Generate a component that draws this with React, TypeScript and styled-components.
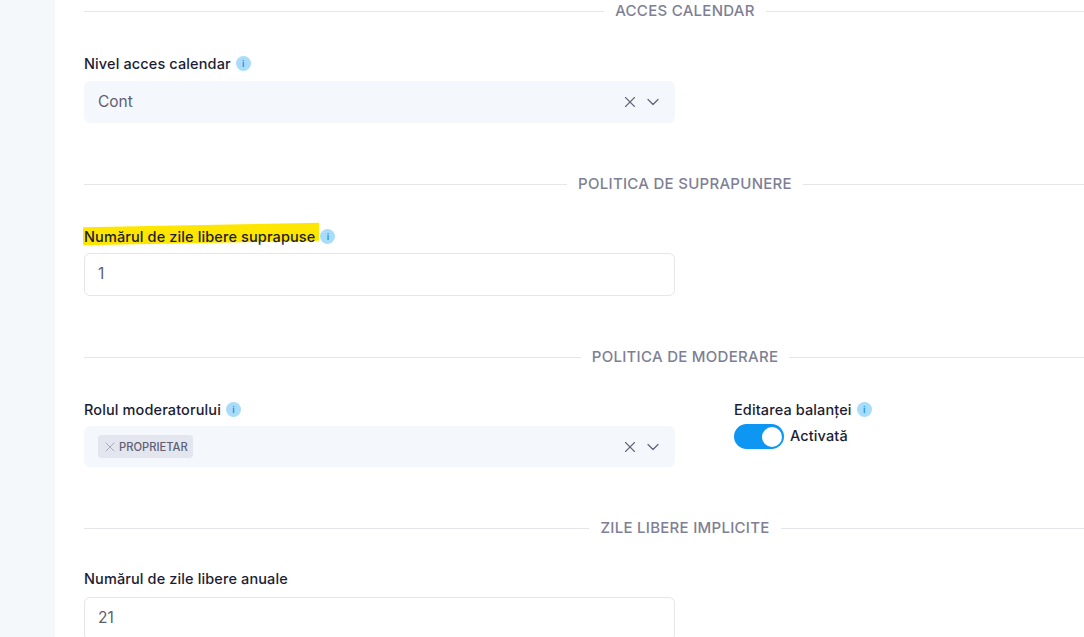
import { FC, ReactNode } from 'react'
import styled, { createGlobalStyle } from 'styled-components'
import { X, ChevronDown } from 'lucide-react'

const GlobalStyle = createGlobalStyle`
  html, body {
    margin: 0;
    height: 100%;
    overflow: hidden;
    background: #fff;
  }
  body {
    font-family: Inter, "Noto Sans", "Liberation Sans", sans-serif;
  }
`

const Info: FC = () => <InfoBadge>i</InfoBadge>

const Divider: FC<{ children: ReactNode }> = ({ children }) => (
  <DividerRow>
    <DividerText>{children}</DividerText>
  </DividerRow>
)

const SelectIcons: FC = () => (
  <IconGroup>
    <X size={18} strokeWidth={1.5} />
    <ChevronDown size={20} strokeWidth={1.5} />
  </IconGroup>
)

const App: FC = () => {
  return (
    <Page>
      <GlobalStyle />
      <Sidebar />
      <Content>
        <Divider>ACCES CALENDAR</Divider>
        <Section>
          <Label $gap={8}>
            Nivel acces calendar <Info />
          </Label>
          <Select $height={42}>
            <SelectValue>Cont</SelectValue>
            <SelectIcons />
          </Select>
        </Section>

        <Divider>POLITICA DE SUPRAPUNERE</Divider>
        <Section>
          <Label>
            <Highlighted>Numărul de zile libere suprapuse</Highlighted> <Info />
          </Label>
          <Input>
            <span>1</span>
          </Input>
        </Section>

        <Divider>POLITICA DE MODERARE</Divider>
        <TwoColumns>
          <div>
            <Label>
              Rolul moderatorului <Info />
            </Label>
            <Select $height={41}>
              <Tag>
                <X size={16} strokeWidth={1} />
                PROPRIETAR
              </Tag>
              <SelectIcons />
            </Select>
          </div>
          <div>
            <Label>
              Editarea balanței <Info />
            </Label>
            <SwitchRow>
              <Switch />
              <SwitchLabel>Activată</SwitchLabel>
            </SwitchRow>
          </div>
        </TwoColumns>

        <Divider>ZILE LIBERE IMPLICITE</Divider>
        <Section $top={29}>
          <Label $gap={9}>Numărul de zile libere anuale</Label>
          <Input>
            <span>21</span>
          </Input>
        </Section>
      </Content>
    </Page>
  )
}

const Page = styled.div`
  display: flex;
  width: 1084px;
  height: 637px;
  overflow: hidden;
`

const Sidebar = styled.div`
  flex: 0 0 55px;
  background: #f4f8fb;
`

const Content = styled.div`
  flex: 0 0 1202px;
  margin-left: 29px;
  padding-top: 1px;
`

const DividerRow = styled.div`
  display: flex;
  align-items: center;
  gap: 11px;
  height: 21px;
  &::before,
  &::after {
    content: '';
    flex: 1;
    height: 1px;
    background: #e4e6ec;
  }
`

const DividerText = styled.span`
  font-size: 15px;
  font-weight: 500;
  color: #7e7f94;
  letter-spacing: 0.28px;
  margin-top: -2px;
`

const Section = styled.div<{ $top?: number }>`
  padding-top: ${(p) => p.$top ?? 31}px;
  height: 152px;
  box-sizing: border-box;
`

const TwoColumns = styled(Section)`
  display: grid;
  grid-template-columns: 591px 1fr;
  column-gap: 59px;
  height: 150px;
`

const Label = styled.div<{ $gap?: number }>`
  display: flex;
  align-items: center;
  gap: 5px;
  height: 20px;
  margin-bottom: ${(p) => p.$gap ?? 7}px;
  font-size: 14.5px;
  font-weight: 500;
  letter-spacing: 0.12px;
  color: #1b1c33;
  white-space: nowrap;
`

const Highlighted = styled.span`
  position: relative;
  z-index: 0;
  &::before {
    content: '';
    position: absolute;
    z-index: -1;
    left: -1px;
    right: -4px;
    top: -2.5px;
    bottom: 1.5px;
    background: #ffe600;
    transform: skewY(-1.1deg);
  }
`

const InfoBadge = styled.span`
  display: inline-flex;
  align-items: center;
  justify-content: center;
  width: 15px;
  height: 15px;
  border-radius: 50%;
  background: #a9dcfb;
  color: #1590e0;
  font-size: 9px;
  font-weight: 600;
  letter-spacing: 0;
`

const Select = styled.div<{ $height: number }>`
  display: flex;
  align-items: center;
  justify-content: space-between;
  box-sizing: border-box;
  width: 591px;
  height: ${(p) => p.$height}px;
  padding: 0 12px 0 14px;
  border-radius: 6px;
  background: #f4f7fb;
`

const SelectValue = styled.span`
  font-size: 15.5px;
  color: #5e5f73;
  margin-top: -2px;
`

const IconGroup = styled.span`
  display: flex;
  align-items: center;
  gap: 4px;
  color: #64657a;
`

const Tag = styled.span`
  display: flex;
  align-items: center;
  gap: 1px;
  height: 23px;
  padding: 0 5px 0 4px;
  border-radius: 4px;
  background: #e3e6ef;
  color: #5e5f73;
  font-size: 11.2px;
  font-weight: 500;
  svg {
    color: #8d8e9e;
  }
`

const Input = styled.div`
  display: flex;
  align-items: center;
  box-sizing: border-box;
  width: 591px;
  height: 43px;
  padding: 0 13px;
  border: 1px solid #e4e6ec;
  border-radius: 6px;
  background: #fff;
  font-size: 15.5px;
  color: #5e5f73;
  span {
    margin-top: -2px;
  }
`

const SwitchRow = styled.div`
  display: flex;
  align-items: center;
  gap: 6px;
  margin-top: -2px;
`

const Switch = styled.span`
  position: relative;
  display: block;
  width: 50px;
  height: 25px;
  border-radius: 13px;
  background: #0d96f2;
  &::after {
    content: '';
    position: absolute;
    top: 2.5px;
    right: 2px;
    width: 20px;
    height: 20px;
    border-radius: 50%;
    background: #fff;
  }
`

const SwitchLabel = styled.span`
  font-size: 14.5px;
  font-weight: 500;
  letter-spacing: 0.12px;
  color: #1b1c33;
  margin-top: -2px;
`

export default App
